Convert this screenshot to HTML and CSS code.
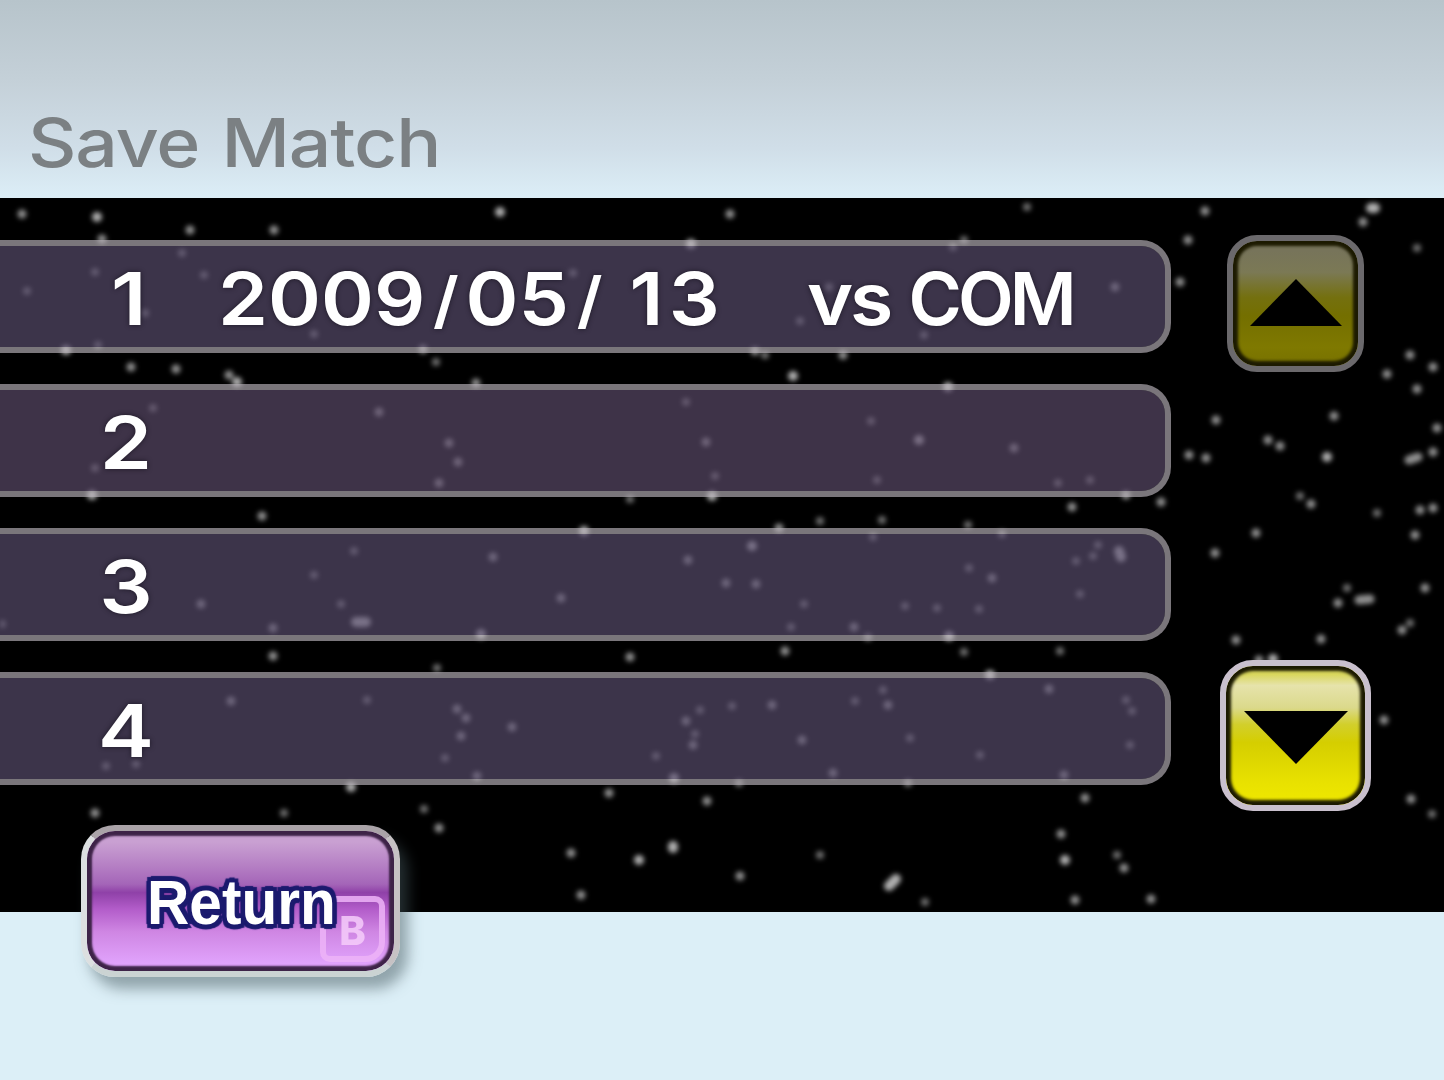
FILE: index.html
```
<!DOCTYPE html>
<html lang="en">
<head>
    <meta charset="UTF-8">
    <meta name="viewport" content="width=device-width, initial-scale=1.0">
    <title>Save Match</title>
    <link rel="stylesheet" href="styles.css">
</head>
<body>
    <header class="header">
        <h1 class="title">Save Match</h1>
    </header>

    <main class="panel">
        <svg class="stars" viewBox="0 198 1444 714" aria-hidden="true">
            <!-- bright stars -->
            <path class="bright" d="M97 217h0M500 212h0M691 244h0M1371 208h4M237 382h0M793 376h0M712 496h0M92 495h0M584 531h0M481 634h0M949 636h0M674 778h0M639 860h0M673 846v2M889 886L896 879M1327 457h0M356 622h10M1119 551L1121 557M1273 659h0M990 675h0M66 350h0M351 787h0M919 440h0M1065 860h0M752 546h0M948 387h0"/>
            <!-- medium stars -->
            <path class="medium" d="M22 214h0M190 230h0M274 230h0M102 239h0M423 349h0M131 367h0M176 369h0M229 375h0M476 383h0M730 214h0M755 351h0M843 355h0M706 442h0M1205 211h0M1363 222h0M1188 240h0M1180 282h0M1115 287h0M1410 355h0M1433 367h0M1387 374h0M1417 389h0M1216 420h0M1334 416h0M1268 440h0M1280 446h0M1189 455h0M1206 458h0M1437 428h0M1433 452h0M1409 460L1418 457M1014 448h0M379 412h0M449 443h0M458 462h0M439 483h0M262 516h0M201 604h0M273 628h0M273 656h0M231 701h0M457 709h0M466 718h0M461 736h0M477 776h0M95 813h0M439 828h0M493 557h0M688 560h0M726 583h0M756 584h0M561 598h0M779 528h0M854 627h0M630 657h0M785 651h0M888 705h0M772 705h0M686 721h0M693 745h0M802 740h0M512 727h0M833 773h0M609 793h0M707 801h0M571 853h0M740 876h0M581 895h0M1072 507h0M1161 502h0M1126 495h0M1311 504h0M1420 510h0M1433 508h0M1415 535h0M1256 533h0M1215 553h0M992 578h0M1338 603h0M1359 600L1370 599M1425 588h0M1402 630h0M1236 640h0M1321 639h0M1049 689h0M1064 775h0M1384 720h0M1411 799h0M1085 798h0M1061 834h0M1124 868h0M1075 900h0M1151 899h0M1259 660h0"/>
            <!-- faint stars -->
            <path class="faint" d="M182 253h0M95 272h0M204 275h0M27 291h0M145 313h0M314 334h0M98 345h0M436 362h0M953 247h0M573 273h0M829 287h0M800 321h0M924 335h0M765 355h0M686 402h0M715 476h0M871 421h0M877 480h0M153 408h0M95 468h0M1027 207h0M1417 248h0M964 240h0M1058 483h0M1090 480h0M354 551h0M314 575h0M341 604h0M2 624h0M437 668h0M367 700h0M445 758h0M106 766h0M136 764h0M284 813h0M424 809h0M630 499h0M820 521h0M882 520h0M873 537h0M804 604h0M905 606h0M937 608h0M791 627h0M868 637h0M883 690h0M855 701h0M732 706h0M700 710h0M695 734h0M910 738h0M656 756h0M739 783h0M908 783h0M820 855h0M925 902h0M1300 496h0M1377 513h0M968 525h0M1002 534h0M969 568h0M979 609h0M1076 561h0M1080 594h0M1093 556h0M1098 545h0M1347 588h0M1410 623h0M964 652h0M1060 651h0M1126 700h0M1132 711h0M1130 745h0M980 755h0M1432 814h0M1117 855h0"/>
        </svg>

        <ol class="slots">
            <li class="slot">
                <span class="number one">1</span>
                <span class="date">2009<i>/</i>05<i>/</i> <span class="day">13</span></span>
                <span class="opponent">vs <span class="name">COM</span></span>
            </li>
            <li class="slot alt"><span class="number">2</span></li>
            <li class="slot"><span class="number">3</span></li>
            <li class="slot"><span class="number">4</span></li>
        </ol>

        <nav class="scroll">
            <button class="arrow up" aria-label="Up" disabled>
                <svg width="92" height="47" viewBox="0 0 92 47"><path d="M46 0L92 47H0z"/></svg>
            </button>
            <button class="arrow down" aria-label="Down">
                <svg width="104" height="53" viewBox="0 0 104 53"><path d="M0 0H104L52 53z"/></svg>
            </button>
        </nav>
    </main>

    <footer class="footer">
        <button class="return">
            <span class="key">B</span>
            <span class="label">Return</span>
        </button>
    </footer>
</body>
</html>
```
FILE: styles.css
```
* {
    box-sizing: border-box;
}

body {
    margin: 0;
    height: 1080px;
    display: flex;
    flex-direction: column;
    overflow: hidden;
    background: #dceff7;
    font-family: Inter, "Liberation Sans", sans-serif;
}

button {
    border: none;
    padding: 0;
    font: inherit;
}

.header {
    height: 198px;
    padding: 101px 0 0 28px;
    background: linear-gradient(#b7c4cb 0%, #c4d0d8 40%, #d0dee8 75%, #dceef7 100%);
}

.title {
    width: 400px;
    margin: 0;
    font-size: 67px;
    line-height: 84px;
    font-weight: 500;
    letter-spacing: -1px;
    word-spacing: 3px;
    color: #7b8083;
    white-space: nowrap;
    transform: scaleX(1.12);
    transform-origin: left;
}

.panel {
    position: relative;
    height: 714px;
    display: flex;
    background: #000;
}

.stars {
    position: absolute;
    inset: 0;
    width: 100%;
    height: 100%;
    fill: none;
    stroke-linecap: round;
    filter: blur(2.6px);
}

.bright {
    stroke: #b0b0b0;
    stroke-width: 10;
}

.medium {
    stroke: #909090;
    stroke-width: 9;
}

.faint {
    stroke: #707070;
    stroke-width: 8;
}

.slots {
    position: relative;
    width: 1171px;
    margin: 0;
    padding: 42px 0 0;
    list-style: none;
    display: flex;
    flex-direction: column;
    gap: 31px;
}

.slot {
    height: 113px;
    padding-top: 5px;
    display: flex;
    align-items: center;
    border: 6px solid rgba(188, 182, 190, 0.65);
    border-left: none;
    border-radius: 0 30px 30px 0;
    background: rgba(92, 80, 114, 0.65) padding-box;
    color: #fff;
    font-size: 73px;
    font-weight: 600;
    line-height: 96px;
    white-space: nowrap;
    text-shadow: 0 0 5px rgba(20, 16, 28, 0.8);
}

.slot.alt {
    background-color: rgba(95, 79, 110, 0.65);
}

.number {
    width: 60px;
    margin-left: 96px;
    text-align: center;
    transform: scaleX(1.15);
}

.number.one {
    padding-left: 5px;
}

.date {
    width: 480px;
    margin-left: 62px;
    transform: scaleX(1.1);
    transform-origin: left;
}

.date i {
    margin: 0 6px 0 7px;
    font-size: 62px;
    font-style: normal;
    vertical-align: 3px;
}

.day {
    letter-spacing: 5px;
}

.opponent {
    width: 250px;
    margin-left: 109px;
    letter-spacing: -3px;
    transform: scaleX(1.08);
    transform-origin: left;
}

.name {
    display: inline-block;
    margin-left: 2px;
    letter-spacing: -4px;
    transform: scaleX(0.92);
    transform-origin: left;
}

.scroll {
    position: relative;
    width: 151px;
    margin-left: 49px;
    padding: 37px 0 101px;
    display: flex;
    flex-direction: column;
    align-items: center;
    justify-content: space-between;
}

.arrow {
    display: flex;
    justify-content: center;
    border: 6px solid #c9c0cd;
    border-radius: 33px;
    box-shadow: inset 0 0 3px 5px #1c1a00;
}

.arrow svg {
    fill: #000;
}

.up {
    width: 137px;
    height: 137px;
    padding-top: 38px;
    border-color: #6b696c;
    border-radius: 30px;
    background: linear-gradient(#77745a 8%, #7b7955 25%, #74700f 45%, #746f00 60%, #7f7900 85%, #777100 100%);
}

.down {
    width: 151px;
    height: 151px;
    padding-top: 45px;
    background: linear-gradient(#d9d75c 6%, #e6e3ab 14%, #dbd98b 30%, #d2cf2c 42%, #d5ce00 55%, #e9e200 85%, #efe800 100%);
}

.footer {
    position: relative;
    flex: 1;
}

/* sits half over the starfield */
.return {
    position: absolute;
    left: 81px;
    top: -87px;
    width: 319px;
    height: 152px;
    display: flex;
    align-items: center;
    justify-content: center;
    border: 6px solid;
    border-color: #aaa3a8 #c6c2c4 #cbd3d3 #dcdfe0;
    border-radius: 34px;
    background: linear-gradient(#c9a0d2 8%, #b57fc4 25%, #a465b8 38%, #8f41a8 44%, #b35dca 56%, #cf86e3 72%, #e0a2fb 94%);
    box-shadow: inset 0 0 2px 5px #3e2348, 8px 12px 14px rgba(70, 90, 95, 0.5);
}

.label {
    position: relative;
    padding: 2px 0 0 2px;
    color: #fff;
    font-family: "Liberation Sans", sans-serif;
    font-size: 63px;
    font-weight: bold;
    line-height: 70px;
    text-shadow: 5px 0 1px #1b1a6e, -5px 0 1px #1b1a6e, 0 5px 1px #1b1a6e, 0 -5px 1px #1b1a6e,
        4px 4px 1px #1b1a6e, -4px 4px 1px #1b1a6e, 4px -4px 1px #1b1a6e, -4px -4px 1px #1b1a6e;
    transform: scaleX(0.93);
}

.key {
    position: absolute;
    right: 9px;
    bottom: 9px;
    width: 65px;
    height: 66px;
    border: 6px solid #eeb4f8;
    border-radius: 10px 10px 20px 10px;
    color: #f6cdfb;
    font-size: 40px;
    font-weight: 800;
    line-height: 57px;
    text-align: center;
    opacity: 0.85;
}
```
